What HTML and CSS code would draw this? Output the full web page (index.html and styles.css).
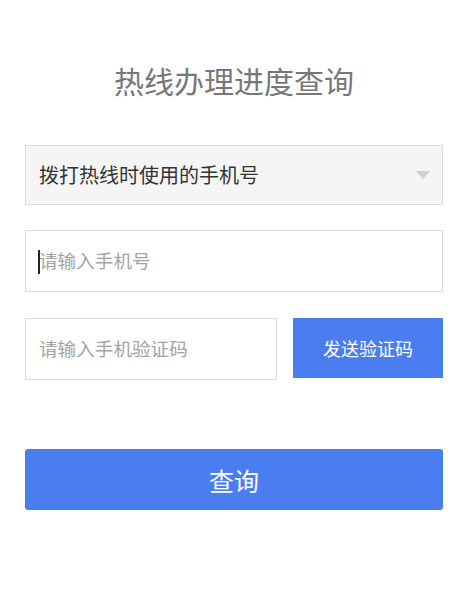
FILE: index.html
```html
<!DOCTYPE html>
<html lang="zh-CN">
<head>
<meta charset="utf-8">
<title>热线办理进度查询</title>
<link rel="stylesheet" href="styles.css">
</head>
<body>
<div class="page">
  <h1 class="title">热线办理进度查询</h1>
  <div class="select">
    <span class="select-text">拨打热线时使用的手机号</span>
    <span class="arrow"></span>
  </div>
  <div class="field phone">
    <span class="caret"></span>
    <input class="input" type="text" placeholder="请输入手机号">
  </div>
  <div class="code-row">
    <div class="field code">
      <input class="input" type="text" placeholder="请输入手机验证码">
    </div>
    <button class="send-btn" type="button">发送验证码</button>
  </div>
  <button class="query-btn" type="button">查询</button>
</div>
</body>
</html>
```

FILE: styles.css
```css
* { box-sizing: border-box; }
html, body { margin: 0; padding: 0; background: #fff; }
body {
  font-family: "Noto Sans CJK SC", "Noto Sans", sans-serif;
}
.page {
  padding: 60px 26px 0 25px;
  display: flex;
  flex-direction: column;
}
.title {
  margin: 0;
  font-size: 30px;
  line-height: 40px;
  height: 40px;
  font-weight: 400;
  color: #777;
  text-align: center;
}
.select {
  margin-top: 45px;
  height: 60px;
  background: #f5f5f5;
  border: 1px solid #dcdcdc;
  display: flex;
  align-items: center;
  justify-content: space-between;
  padding: 0 12px 2px 13px;
}
.select-text {
  font-size: 20px;
  color: #333;
}
.arrow {
  width: 0;
  height: 0;
  border-left: 7px solid transparent;
  border-right: 7px solid transparent;
  border-top: 8px solid #cfcfcf;
  margin-top: 2px;
}
.field {
  position: relative;
  border: 1px solid #dcdcdc;
  background: #fff;
  display: flex;
  align-items: center;
}
.phone {
  margin-top: 25px;
  height: 62px;
}
.input {
  border: 0;
  outline: 0;
  background: transparent;
  width: 100%;
  height: 100%;
  padding: 0 13px 3px;
  font-family: inherit;
  font-size: 18.6px;
  color: #333;
  caret-color: transparent;
}
.input::placeholder { color: #a3a3a3; }
.caret {
  position: absolute;
  left: 12px;
  top: 19px;
  width: 2px;
  height: 24px;
  background: #222;
}
.code-row {
  margin-top: 26px;
  display: flex;
  align-items: flex-start;
  gap: 16px;
}
.code {
  flex: 0 0 252px;
  height: 62px;
}
.send-btn {
  flex: 1;
  height: 60px;
  border: 0;
  background: #4a7ef0;
  color: #fff;
  font-family: inherit;
  font-size: 18px;
  padding: 0;
}
.query-btn {
  margin-top: 69px;
  height: 61px;
  border: 0;
  border-radius: 3px;
  background: #4a7ef0;
  color: #fff;
  font-family: inherit;
  font-size: 25px;
  padding: 0;
}
```
